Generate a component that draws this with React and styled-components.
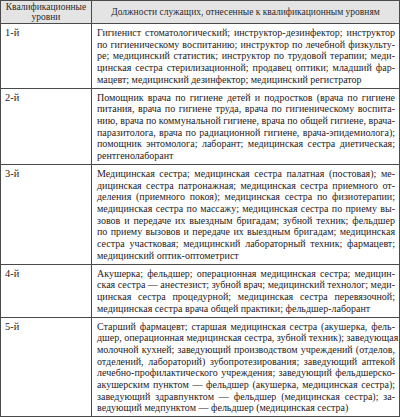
import React from 'react';
import styled, { createGlobalStyle } from 'styled-components';

const GlobalStyle = createGlobalStyle`
  html, body {
    margin: 0;
    padding: 0;
    background: #ffffff;
  }
  body {
    font-family: "Liberation Serif", "DejaVu Serif", serif;
    color: #231f20;
  }
`;

const Table = styled.table`
  width: 400px;
  border-collapse: collapse;
  table-layout: fixed;
  font-family: "Liberation Serif", "DejaVu Serif", serif;
  color: #1f1b1c;
`;

const HeadCell = styled.th`
  background: #e4e4e4;
  border: 1px solid #4a4a4a;
  font-family: "Liberation Serif", serif;
  font-weight: normal;
  font-size: 9.5px;
  line-height: 10px;
  text-align: center;
  vertical-align: middle;
  padding: 1px 3px 1px;
  height: 19px;
  color: #2b2b2b;
  overflow: hidden;
`;

const LevelCell = styled.td`
  border: 1px solid #4a4a4a;
  vertical-align: top;
  font-family: "Liberation Serif", serif;
  font-size: 10.4px;
  padding: 3px 4px 2.5px;
`;

const TextCell = styled.td`
  border: 1px solid #4a4a4a;
  vertical-align: top;
  font-family: "Liberation Serif", serif;
  font-size: 10px;
  padding: 3px 4px 2.5px 5px;
  overflow: hidden;
`;

const Line = styled.span`
  display: block;
  height: 11.65px;
  line-height: 11.65px;
  white-space: nowrap;
  text-align: justify;
  text-align-last: ${p => (p.$last ? 'left' : 'justify')};
`;

const rows = [
  {
    level: '1-й',
    lines: [
      'Гигиенист стоматологический; инструктор-дезинфектор; инструктор',
      'по гигиеническому воспитанию; инструктор по лечебной физкульту-',
      'ре; медицинский статистик; инструктор по трудовой терапии; меди-',
      'цинская сестра стерилизационной; продавец оптики; младший фар-',
      'мацевт; медицинский дезинфектор; медицинский регистратор',
    ],
  },
  {
    level: '2-й',
    lines: [
      'Помощник врача по гигиене детей и подростков (врача по гигиене',
      'питания, врача по гигиене труда, врача по гигиеническому воспита-',
      'нию, врача по коммунальной гигиене, врача по общей гигиене, врача-',
      'паразитолога, врача по радиационной гигиене, врача-эпидемиолога);',
      'помощник энтомолога; лаборант; медицинская сестра диетическая;',
      'рентгенолаборант',
    ],
  },
  {
    level: '3-й',
    lines: [
      'Медицинская сестра; медицинская сестра палатная (постовая); ме-',
      'дицинская сестра патронажная; медицинская сестра приемного от-',
      'деления (приемного покоя); медицинская сестра по физиотерапии;',
      'медицинская сестра по массажу; медицинская сестра по приему вы-',
      'зовов и передаче их выездным бригадам; зубной техник; фельдшер',
      'по приему вызовов и передаче их выездным бригадам; медицинская',
      'сестра участковая; медицинский лабораторный техник; фармацевт;',
      'медицинский оптик-оптометрист',
    ],
  },
  {
    level: '4-й',
    lines: [
      'Акушерка; фельдшер; операционная медицинская сестра; медицин-',
      'ская сестра — анестезист; зубной врач; медицинский технолог; меди-',
      'цинская сестра процедурной; медицинская сестра перевязочной;',
      'медицинская сестра врача общей практики; фельдшер-лаборант',
    ],
  },
  {
    level: '5-й',
    lines: [
      'Старший фармацевт; старшая медицинская сестра (акушерка, фель-',
      'дшер, операционная медицинская сестра, зубной техник); заведующая',
      'молочной кухней; заведующий производством учреждений (отделов,',
      'отделений, лабораторий) зубопротезирования; заведующий аптекой',
      'лечебно-профилактического учреждения; заведующий фельдшерско-',
      'акушерским пунктом — фельдшер (акушерка, медицинская сестра);',
      'заведующий здравпунктом — фельдшер (медицинская сестра); за-',
      'ведующий медпунктом — фельдшер (медицинская сестра)',
    ],
  },
];

export default function App() {
  return (
    <>
      <GlobalStyle />
      <Table>
        <colgroup>
          <col style={{ width: 91 }} />
          <col />
        </colgroup>
        <thead>
          <tr>
            <HeadCell>Квалификационные уровни</HeadCell>
            <HeadCell>Должности служащих, отнесенные к квалификационным уровням</HeadCell>
          </tr>
        </thead>
        <tbody>
          {rows.map(r => (
            <tr key={r.level}>
              <LevelCell>
                <Line $last>{r.level}</Line>
              </LevelCell>
              <TextCell>
                {r.lines.map((l, i) => (
                  <Line key={i} $last={i === r.lines.length - 1}>{l}</Line>
                ))}
              </TextCell>
            </tr>
          ))}
        </tbody>
      </Table>
    </>
  );
}
